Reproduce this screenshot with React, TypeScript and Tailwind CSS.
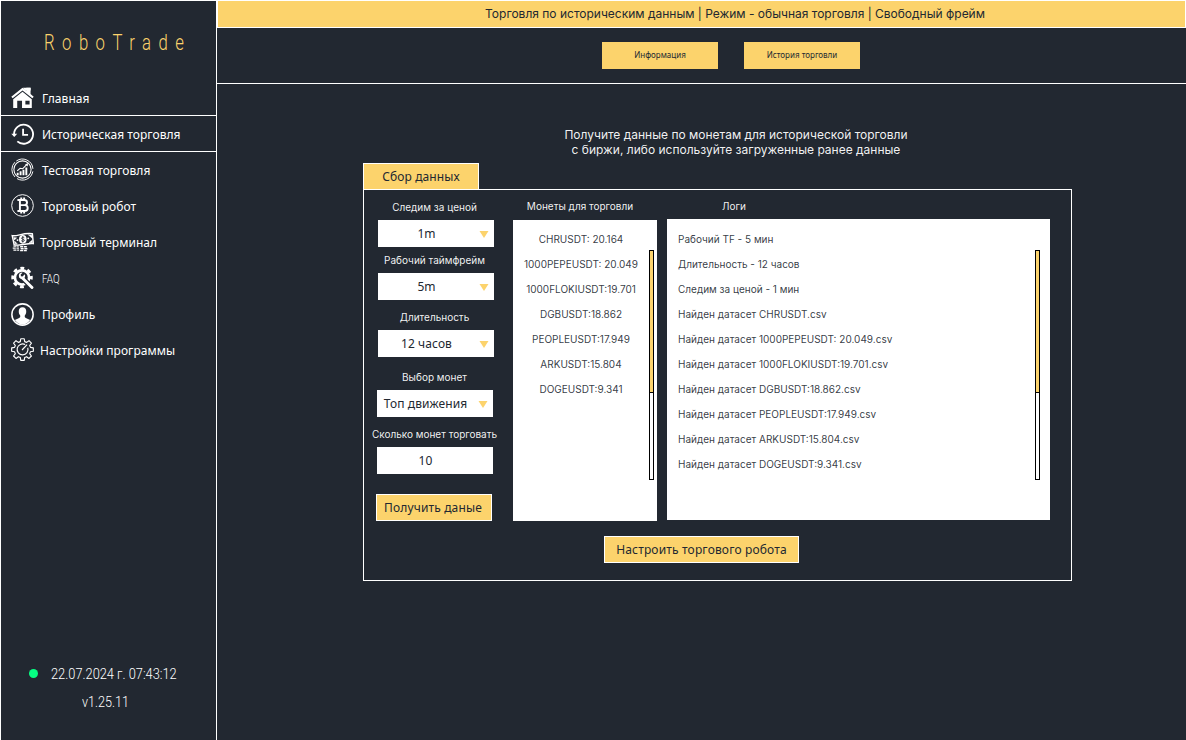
import React from "react";

const noto = "font-['Noto_Sans',sans-serif]";
const inter = "font-['Inter',sans-serif]";

function HomeIcon() {
  return (
    <svg className="h-6 w-[23px]" viewBox="0 0 24 24" fill="#fff">
      <path d="M12 1.200 0.300 10.600l1.400 1.700L12 4.200l10.300 8.100 1.400-1.700-3.300-2.700V1.300h-4.400v3.100z" />
      <path d="M12.500 1.300h8v3h-6z" />
      <path fillRule="evenodd" d="M12 5.500 2.300 13.200V22.500H6.500v-7.700h5v7.700h10.200V13.200zM15 14.800v4h4.400v-4z" />
    </svg>
  );
}

function HistoryIcon() {
  return (
    <svg className="mt-px h-6 w-[23px]" viewBox="0 0 24 24" fill="none" stroke="#fff">
      <path d="M3.200 12.500a9.900 9.900 0 1 1 3.400 7.200" strokeWidth="1.900" />
      <path d="M12.600 6.600v6.300h5.200" strokeWidth="1.900" />
      <path d="M0.300 11.800h6.200L3.400 15.200z" fill="#fff" stroke="none" />
    </svg>
  );
}

function GrowthIcon() {
  return (
    <svg className="size-[23px]" viewBox="0 0 24 24" fill="none" stroke="#fff">
      <path d="M5.500 3.200a11 11 0 0 1 17.400 8.100M22.800 14a11 11 0 0 1-16.500 7.500M4 19.700A11 11 0 0 1 4 4.400" strokeWidth="1" />
      <circle cx="12" cy="12" r="9" strokeWidth="1.100" />
      <g fill="#fff" stroke="none">
        <path d="M6 15.500h2v2.500H6zM9 13.800h2V18H9zM12 12.300h2V18h-2zM15 9.800h2V18h-2z" />
        <path d="m17.800 5.200-.4 3.700-2.700-2z" />
      </g>
      <path d="m6.500 13.500 3-2.700 2.800.4 4-4.200" strokeWidth="1.100" />
    </svg>
  );
}

function BitcoinIcon() {
  return (
    <svg className="size-[23px]" viewBox="0 0 24 24" fill="none" stroke="#fff">
      <circle cx="12" cy="12" r="11.300" strokeWidth="1" />
      <path d="M6.700 6.200h7.300a2.700 2.700 0 0 1 0 5.400H9.700h4.700a3.050 3.050 0 0 1 0 6.100H6.700M9.300 6.200v11.500M10.700 3.700v2.500M13.700 3.700v2.500M10.700 17.700v2.700M13.700 17.700v2.700" strokeWidth="2" />
    </svg>
  );
}

function MoneyIcon() {
  return (
    <svg className="h-6 w-[23px]" viewBox="0 0 24 24" fill="none" stroke="#fff">
      <path d="M1.300 5.400c5.500 1.100 11-3.400 21-2l1 10.300c-7-.8-12 2.800-20 1.200z" fill="#222831" strokeWidth="1.500" />
      <path d="m2.800 7.300 3.200.2-2.500 2.600zM18 4.500l3.800.5.300 3zM22.200 10v2.800l-3.400-.1zM4 13.700l-.3-2.700 2.900 2.900z" fill="#fff" strokeWidth=".4" />
      <ellipse cx="12.300" cy="9.200" rx="4" ry="4.500" fill="#fff" stroke="none" />
      <path d="M13.900 7.600c-1.200-1.100-3-.5-2.800.7.300 1.100 2.800.6 2.900 1.900 0 1.300-2.200 1.500-3.300.4M12.300 5.900v6.600" stroke="#222831" strokeWidth=".9" />
      <circle cx="6.800" cy="10" r="1" fill="#fff" stroke="none" />
      <circle cx="18" cy="8.200" r="1" fill="#fff" stroke="none" />
      <path d="M2.500 16.300H8M1.800 18.400h6.500M2.500 20.500H8.500M9.500 17h7M10 19h7.500M9.500 21h7" strokeWidth="1.500" strokeDasharray="3.200 .7" />
    </svg>
  );
}

function RepairIcon() {
  return (
    <svg className="h-6 w-[23px]" viewBox="0 0 24 24" fill="none" stroke="#fff">
      <circle cx="11.500" cy="11.500" r="7.400" strokeWidth="2.800" />
      <circle cx="11.500" cy="11.500" r="9.700" strokeWidth="3" strokeDasharray="4 3.618" strokeDashoffset="2" />
      <path d="m11.500 11.500 12 12" stroke="#222831" strokeWidth="5.500" />
      <path d="m12.200 12.200 9.700 9.700" strokeWidth="3" strokeLinecap="round" />
      <path d="M8.200 9.300a3.500 3.500 0 0 0 5.700 3.200 3.400 3.400 0 0 0 .4-4.300l-2.200 2.300-1.700-.4-.3-1.700 2.100-2a3.500 3.500 0 0 0-4 2.900z" fill="#fff" stroke="none" />
    </svg>
  );
}

function ProfileIcon() {
  return (
    <svg className="mt-[2px] size-[23px]" viewBox="0 0 24 24" fill="none">
      <circle cx="12" cy="12" r="11.100" stroke="#fff" strokeWidth="1.600" />
      <path d="M12 4.500c-2.700 0-4 1.800-3.900 4.300 0 2.200.8 3.300 1.500 4.200.3 1.700-.2 2.300-1.600 3l-4 1.700A10.600 10.600 0 0 0 12 22.500a10.600 10.600 0 0 0 8-4.800L16 16c-1.400-.7-1.900-1.300-1.600-3 .7-.9 1.500-2 1.500-4.200.1-2.500-1.200-4.300-3.900-4.300z" fill="#fff" />
    </svg>
  );
}

function SettingsIcon() {
  return (
    <svg className="size-[23px]" viewBox="0 0 24 24" fill="none" stroke="#fff" strokeWidth="1.200" strokeLinejoin="round">
      <path d="M10.200.8h3.600l.5 3 2 .8 2.500-1.800 2.500 2.500-1.800 2.500.8 2 3 .5v3.500l-3 .5-.8 2 1.800 2.500-2.500 2.500-2.500-1.800-2 .8-.5 3h-3.600l-.5-3-2-.8-2.500 1.800-2.500-2.500 1.800-2.500-.8-2-3-.5v-3.500l3-.5.8-2-1.800-2.500 2.500-2.500 2.500 1.800 2-.8z" />
      <path d="M14.800 6.900a5.700 5.700 0 1 0 2.700 3.300" />
      <path d="m11.500 12.500 5.300-5.500" />
    </svg>
  );
}

const nav = [
  { label: "Главная", icon: <HomeIcon />, row: "border-white", text: "ml-2" },
  { label: "Историческая торговля", icon: <HistoryIcon />, row: "border-white", text: "ml-2" },
  { label: "Тестовая торговля", icon: <GrowthIcon />, row: "border-transparent", text: "ml-2" },
  { label: "Торговый робот", icon: <BitcoinIcon />, row: "border-transparent", text: "ml-2" },
  { label: "Торговый терминал", icon: <MoneyIcon />, row: "border-transparent", text: "ml-1.5" },
  { label: "FAQ", icon: <RepairIcon />, row: "border-transparent", text: "ml-2 origin-left scale-x-[0.820] font-['Roboto',sans-serif] font-light" },
  { label: "Профиль", icon: <ProfileIcon />, row: "border-transparent", text: "ml-2" },
  { label: "Настройки программы", icon: <SettingsIcon />, row: "border-transparent", text: "ml-1.5" },
];

const coins = [
  "CHRUSDT: 20.164",
  "1000PEPEUSDT: 20.049",
  "1000FLOKIUSDT:19.701",
  "DGBUSDT:18.862",
  "PEOPLEUSDT:17.949",
  "ARKUSDT:15.804",
  "DOGEUSDT:9.341",
];

const logs = [
  "Рабочий TF - 5 мин",
  "Длительность - 12 часов",
  "Следим за ценой - 1 мин",
  "Найден датасет CHRUSDT.csv",
  "Найден датасет 1000PEPEUSDT: 20.049.csv",
  "Найден датасет 1000FLOKIUSDT:19.701.csv",
  "Найден датасет DGBUSDT:18.862.csv",
  "Найден датасет PEOPLEUSDT:17.949.csv",
  "Найден датасет ARKUSDT:15.804.csv",
  "Найден датасет DOGEUSDT:9.341.csv",
];

function Sidebar() {
  return (
    <aside className="flex w-[217px] shrink-0 flex-col border border-b-0 border-white text-white">
      <div className="flex h-[79px] items-center pt-[4px] pl-[43px]">
        <span className="origin-left scale-x-[0.760] font-['Roboto',sans-serif] text-[22px] font-light tracking-[9.800px] whitespace-nowrap text-[#fcd36c]">
          RoboTrade
        </span>
      </div>
      <nav className={`${noto} text-xs tracking-[0.040px]`}>
        {nav.map((item) => (
          <div key={item.label} className={`flex h-9 items-center border-b pl-[10px] ${item.row}`}>
            {item.icon}
            <span className={`pt-[3px] whitespace-nowrap ${item.text}`}>{item.label}</span>
          </div>
        ))}
      </nav>
      <div className="mt-auto mb-[24px] font-['Roboto',sans-serif] text-sm font-light whitespace-nowrap">
        <div className="flex h-7 items-center pl-[28px]">
          <span className="-mt-[2px] size-[9px] rounded-full bg-[#06ff83]" />
          <span className="ml-[13px] origin-left scale-x-[0.915]">22.07.2024 г. 07:43:12</span>
        </div>
        <div className="flex h-7 items-center pl-[81px]">
          <span className="origin-left scale-x-[0.900]">v1.25.11</span>
        </div>
      </div>
    </aside>
  );
}

function Field({ label, value, top, left, arrow = true }: { label: string; value: string; top: string; left: string; arrow?: boolean }) {
  return (
    <div className={`flex w-[141px] flex-col ${top}`}>
      <div className={`${inter} flex h-5 items-start justify-center text-[10px] leading-[15px] whitespace-nowrap text-white/95`}>{label}</div>
      <div className={`${noto} flex h-[27px] w-[116px] items-center bg-white text-xs tracking-[0.080px] text-[#222831] ${left}`}>
        <span className="w-[97px] text-center whitespace-nowrap">{value}</span>
        {arrow && (
          <svg className="mt-[2px] ml-[4px] h-[7px] w-[10px]" viewBox="0 0 10 7" fill="#fcd36c">
            <path d="M0.500 0h9L5 7z" />
          </svg>
        )}
      </div>
    </div>
  );
}

function ScrollBar({ place }: { place: string }) {
  return (
    <div className={`absolute h-[230px] w-[5px] border border-black bg-white ${place}`}>
      <div className="h-[142px] border-b border-black bg-[#fcd36c]" />
    </div>
  );
}

export default function App() {
  return (
    <div className="flex h-[740px] w-[1186px] overflow-hidden bg-[#222831]">
      <Sidebar />
      <main className="flex flex-1 flex-col">
        <header className={`${inter} flex h-7 items-center justify-center border border-white bg-[#fcd36c] pl-[67px] text-xs whitespace-nowrap text-[#222831]`}>
          Торговля по историческим данным | Режим - обычная торговля | Свободный фрейм
        </header>
        <div className={`${noto} flex h-14 items-center gap-[26px] border-b border-white pl-[385px] text-[8px] text-[#222831]`}>
          <button className="h-[27px] w-[116px] bg-[#fcd36c] pb-px">Информация</button>
          <button className="h-[27px] w-[116px] bg-[#fcd36c] pb-px">История торговли</button>
        </div>
        <p className={`${inter} mt-[43px] pl-[69px] text-center text-xs leading-[15px] text-white/95`}>
          Получите данные по монетам для исторической торговли
          <br />с биржи, либо используйте загруженные ранее данные
        </p>
        <section className="mt-[6px] ml-[146px] w-[709px]">
          <div className={`${noto} flex h-[26px] w-[116px] items-center justify-center border border-b-0 border-white bg-[#fcd36c] text-xs tracking-[0.120px] text-[#222831]`}>
            Сбор данных
          </div>
          <div className="h-[392px] border border-white">
            <div className="flex h-[331px]">
              <div className="w-[149px] shrink-0">
                <Field label="Следим за ценой" value="1m" top="mt-[10px]" left="ml-[14px]" />
                <Field label="Рабочий таймфрейм" value="5m" top="mt-[6px]" left="ml-[14px]" />
                <Field label="Длительность" value="12 часов" top="mt-[10px]" left="ml-[14px]" />
                <Field label="Выбор монет" value="Топ движения" top="mt-[13px]" left="ml-[13px]" />
                <Field label="Сколько монет торговать" value="10" top="mt-[10px]" left="ml-[13px]" arrow={false} />
                <button className={`${noto} mt-[20px] ml-[12px] block h-[27px] w-[116px] border border-white bg-[#fcd36c] pr-[2px] text-xs tracking-[0.140px] whitespace-nowrap text-[#222831]`}>
                  Получить даные
                </button>
              </div>
              <div className={`${inter} w-[144px] text-[10px]`}>
                <div className="flex h-[30px] items-center justify-center pt-[3px] pr-[10px] text-white/95">Монеты для торговли</div>
                <div className="relative h-[301px] bg-white pt-[7px] pr-2 text-center leading-[25px] text-[#222831]/90">
                  {coins.map((c) => (
                    <div key={c} className="whitespace-nowrap">{c}</div>
                  ))}
                  <ScrollBar place="top-[30px] right-[3px]" />
                </div>
              </div>
              <div className={`${inter} ml-[10px] w-[383px] text-[10px]`}>
                <div className="flex h-[29px] items-center pt-[3px] pl-[55px] text-white/95">Логи</div>
                <div className="relative h-[301px] bg-white pt-[8px] pl-[11px] leading-[25px] text-[#222831]/90">
                  {logs.map((l) => (
                    <div key={l}>{l}</div>
                  ))}
                  <ScrollBar place="top-[31px] right-[10px]" />
                </div>
              </div>
            </div>
            <button className={`${noto} mt-[15px] ml-[240px] block h-[27px] w-[195px] border border-white bg-[#fcd36c] text-xs tracking-[0.160px] whitespace-nowrap text-[#222831]`}>
              Настроить торгового робота
            </button>
          </div>
        </section>
      </main>
    </div>
  );
}
